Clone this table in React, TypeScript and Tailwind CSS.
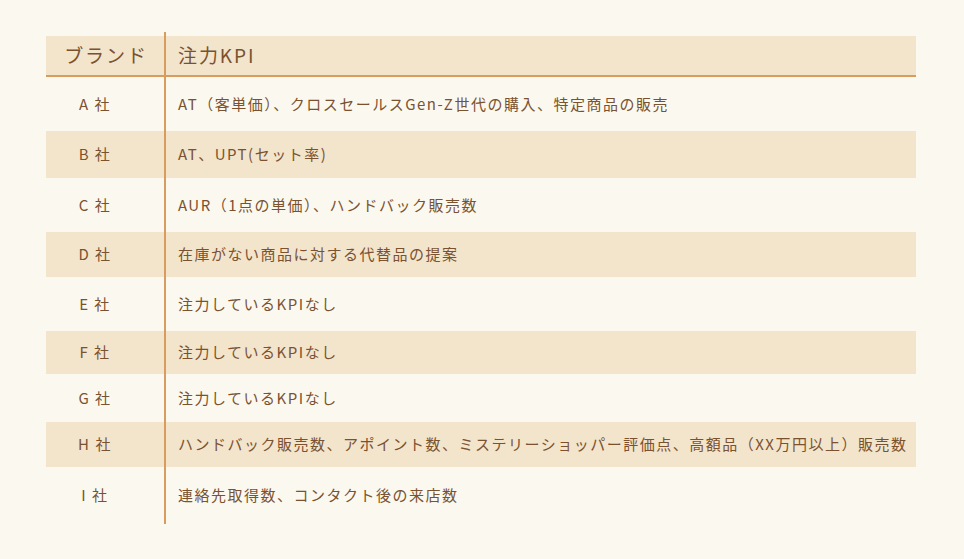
const rows: { brand: string; kpi: string; h: string; band: boolean }[] = [
  { brand: "A 社", kpi: "AT（客単価）、クロスセールスGen-Z世代の購入、特定商品の販売", h: "h-[54px]", band: false },
  { brand: "B 社", kpi: "AT、UPT(セット率)", h: "h-[47px]", band: true },
  { brand: "C 社", kpi: "AUR（1点の単価）、ハンドバック販売数", h: "h-[54px]", band: false },
  { brand: "D 社", kpi: "在庫がない商品に対する代替品の提案", h: "h-[45px]", band: true },
  { brand: "E 社", kpi: "注力しているKPIなし", h: "h-[54px]", band: false },
  { brand: "F 社", kpi: "注力しているKPIなし", h: "h-[43px]", band: true },
  { brand: "G 社", kpi: "注力しているKPIなし", h: "h-[48px]", band: false },
  { brand: "H 社", kpi: "ハンドバック販売数、アポイント数、ミステリーショッパー評価点、高額品（XX万円以上）販売数", h: "h-[45px]", band: true },
  { brand: "I 社", kpi: "連絡先取得数、コンタクト後の来店数", h: "h-[57px]", band: false },
];

export default function App() {
  return (
    <div
      className="h-[559px] w-[964px] bg-[#fbf9ef] pl-[46px] pt-[32px] text-[#7a5230]"
      style={{ fontFamily: '"Noto Sans CJK JP", "Noto Sans", sans-serif' }}
    >
      <div className="w-[870px]">
        {/* line sticks out above the header */}
        <div className="flex h-[4px]">
          <div className="w-[118px]" />
          <div className="flex-1 border-l-2 border-[#d99c5f]" />
        </div>

        <div className="flex h-[41px] border-b-2 border-[#d99c5f] bg-[#f3e4cc] text-[19px] tracking-[0.1em]">
          <div className="flex w-[118px] items-center justify-center pl-[2px]">ブランド</div>
          <div className="flex flex-1 items-center border-l-2 border-[#d99c5f] pl-[12px]">注力KPI</div>
        </div>

        {rows.map((r) => (
          <div
            key={r.brand}
            className={`flex ${r.h} text-[15px] tracking-[0.1em] ${r.band ? "bg-[#f3e4cc]" : ""}`}
          >
            <div className="flex w-[118px] items-center justify-center pr-[20px]">{r.brand}</div>
            <div className="flex flex-1 items-center whitespace-nowrap border-l-2 border-[#d99c5f] pl-[12px]">
              {r.kpi}
            </div>
          </div>
        ))}
      </div>
    </div>
  );
}
